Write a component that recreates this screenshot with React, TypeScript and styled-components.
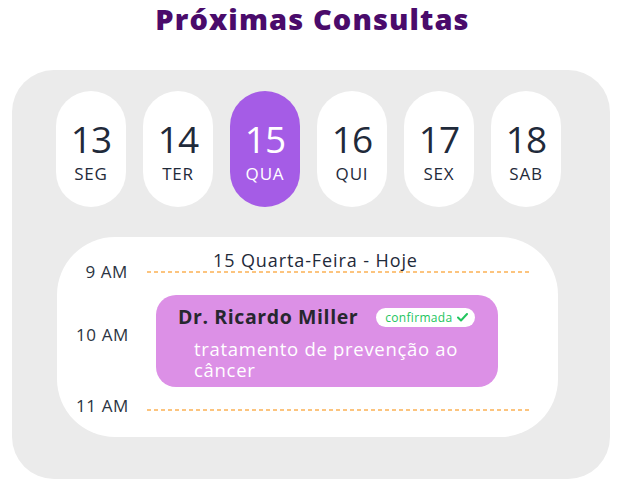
import React from "react";
import styled, { createGlobalStyle } from "styled-components";

const Global = createGlobalStyle`
  html, body { margin: 0; padding: 0; background: #ffffff; }
  body { font-family: "Open Sans", "Noto Sans", sans-serif; }
`;

const Page = styled.div`
  width: 627px;
  height: 489px;
  display: flex;
  flex-direction: column;
  box-sizing: border-box;
`;

const Title = styled.h1`
  margin: 0;
  height: 70px;
  padding-top: 1px;
  box-sizing: border-box;
  text-align: center;
  padding-right: 2px;
  font-family: "Open Sans", sans-serif;
  font-weight: 800;
  font-size: 29px;
  letter-spacing: 1.1px;
  line-height: 36px;
  color: #4a0b6b;
`;

const Panel = styled.div`
  margin: 0 17px 0 12px;
  height: 409px;
  background: #ebebeb;
  border-radius: 42px;
  padding: 21px 0 0 44px;
  box-sizing: border-box;
  display: flex;
  flex-direction: column;
`;

const DayRow = styled.div`
  display: flex;
  gap: 17px;
`;

const Pill = styled.div<{ $active?: boolean }>`
  width: 70px;
  height: 116px;
  border-radius: 35px;
  background: ${(p) => (p.$active ? "#a55ce6" : "#ffffff")};
  color: ${(p) => (p.$active ? "#ffffff" : "#1f2a3a")};
  display: flex;
  flex-direction: column;
  align-items: center;
  padding-top: 33px;
  box-sizing: border-box;
`;

const DayNum = styled.div`
  font-family: "Open Sans", sans-serif;
  font-size: 37px;
  line-height: 30px;
  font-weight: 500;
  letter-spacing: -1px;
`;

const DayName = styled.div`
  font-family: "Open Sans", sans-serif;
  font-size: 17px;
  line-height: 18px;
  letter-spacing: 0.8px;
  margin-top: 11px;
`;

const Schedule = styled.div`
  margin-top: 30px;
  margin-left: 1px;
  width: 501px;
  height: 200px;
  background: #ffffff;
  border-radius: 58px;
  box-sizing: border-box;
  padding: 15px 28px 0 19px;
  display: grid;
  grid-template-columns: 52px 1fr;
  column-gap: 19px;
  grid-template-rows: 16px 8px auto 8px;
  align-content: start;
  align-items: center;
`;

const DayHeader = styled.div`
  grid-column: 2;
  padding-left: 66px;
  font-family: "Open Sans", sans-serif;
  font-size: 18px;
  letter-spacing: 0.9px;
  line-height: 16px;
  color: #1f2a3a;
  white-space: nowrap;
`;

const TimeLabel = styled.div<{ $shift?: number }>`
  grid-column: 1;
  text-align: right;
  font-family: "Open Sans", sans-serif;
  font-size: 17px;
  letter-spacing: 0.6px;
  line-height: 8px;
  color: #2b3442;
  white-space: nowrap;
  transform: translateY(${(p) => p.$shift ?? 0}px);
`;

const Dotted = styled.div`
  grid-column: 2;
  height: 2px;
  background: repeating-linear-gradient(90deg, #fcc47e 0 4px, transparent 4px 7px);
`;

const Card = styled.div`
  grid-column: 2;
  margin: 19px 32px 19px 9px;
  height: 92px;
  background: #dc90e6;
  border-radius: 20px;
  padding: 10px 20px 0 22px;
  box-sizing: border-box;
`;

const CardHead = styled.div`
  display: flex;
  align-items: center;
  gap: 18px;
`;

const DoctorName = styled.div`
  font-family: "Open Sans", sans-serif;
  font-weight: 700;
  font-size: 19.5px;
  line-height: 24px;
  color: #27272f;
  letter-spacing: 0.6px;
`;

const Badge = styled.div`
  display: flex;
  align-items: center;
  gap: 5px;
  height: 19px;
  padding: 0 7px 0 9px;
  border-radius: 10px;
  background: #ffffff;
  font-family: "Open Sans", sans-serif;
  font-size: 12px;
  letter-spacing: 0.3px;
  color: #22c55e;
`;

const Desc = styled.div`
  margin-top: 9px;
  padding-left: 16px;
  width: 280px;
  font-family: "Open Sans", sans-serif;
  font-size: 18.5px;
  letter-spacing: 0.7px;
  line-height: 21px;
  color: #ffffff;
`;

const days = [
  { n: "13", d: "SEG" },
  { n: "14", d: "TER" },
  { n: "15", d: "QUA", active: true },
  { n: "16", d: "QUI" },
  { n: "17", d: "SEX" },
  { n: "18", d: "SAB" },
];

export default function App() {
  return (
    <Page>
      <Global />
      <Title>Próximas Consultas</Title>
      <Panel>
        <DayRow>
          {days.map((x) => (
            <Pill key={x.n} $active={x.active}>
              <DayNum>{x.n}</DayNum>
              <DayName>{x.d}</DayName>
            </Pill>
          ))}
        </DayRow>
        <Schedule>
          <DayHeader>15 Quarta-Feira - Hoje</DayHeader>
          <TimeLabel>9 AM</TimeLabel>
          <Dotted />
          <TimeLabel $shift={-6}>10 AM</TimeLabel>
          <Card>
            <CardHead>
              <DoctorName>Dr. Ricardo Miller</DoctorName>
              <Badge>
                confirmada
                <svg width="11" height="9" viewBox="0 0 11 9">
                  <path d="M1 4.5 L4 7.5 L10 1" fill="none" stroke="#22c55e" strokeWidth="2" strokeLinecap="round" strokeLinejoin="round" />
                </svg>
              </Badge>
            </CardHead>
            <Desc>tratamento de prevenção ao câncer</Desc>
          </Card>
          <TimeLabel $shift={-4}>11 AM</TimeLabel>
          <Dotted />
        </Schedule>
      </Panel>
    </Page>
  );
}
